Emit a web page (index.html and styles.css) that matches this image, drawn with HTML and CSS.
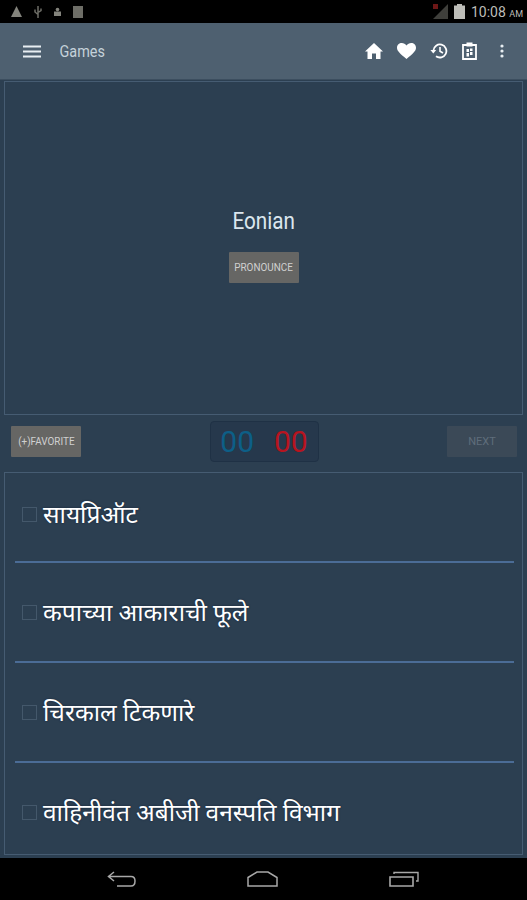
FILE: index.html
```html
<!DOCTYPE html>
<html>
  <head>
    <title>Games</title>
    <link rel="stylesheet" href="styles.css">
  </head>
  <body>
    <div class="status-bar">
      <div class="status-left">
        <svg width="11" height="11" viewBox="0 0 11 11"><path d="M5.5 0 L11 11 H0 Z" fill="#83837c"/></svg>
        <svg width="8" height="12" viewBox="0 0 8 12"><path d="M4 0 V12 M4 8.5 L1 6 V3.5 M4 6.5 L7 4.5 V2.5" stroke="#6e6e67" stroke-width="1.5" fill="none"/></svg>
        <svg width="7" height="9" viewBox="0 0 7 9"><path d="M0 9 V4.5 H7 V9 Z" fill="#83837c"/><circle cx="3.5" cy="2.6" r="1.8" fill="#83837c"/></svg>
        <svg width="10" height="12" viewBox="0 0 10 12"><rect width="10" height="12" fill="#6e6e67"/></svg>
      </div>
      <div class="status-right">
        <svg width="15" height="15" viewBox="0 0 15 15"><path d="M15 0 V15 H0 Z" fill="#3f3f3b"/><rect x="0" y="0" width="5" height="5" fill="#6d1717"/></svg>
        <svg width="11" height="15" viewBox="0 0 11 15"><path d="M3 0 H8 V1.5 H11 V15 H0 V1.5 H3 Z" fill="#bdbdb8"/></svg>
        <span class="clock">10:08 <small>AM</small></span>
      </div>
    </div>

    <div class="toolbar">
      <svg width="18" height="13" viewBox="0 0 18 13"><path d="M0 1.5 H18 M0 6.5 H18 M0 11.5 H18" stroke="#e8eef2" stroke-width="2.2"/></svg>
      <span class="toolbar-title"><span class="narrow">Games</span></span>
      <div class="toolbar-actions">
        <svg width="18" height="16" viewBox="0 0 18 16"><path d="M9 0 L18 8.5 H15.5 V16 H11 V10.5 H7 V16 H2.5 V8.5 H0 Z" fill="#fff"/></svg>
        <svg width="19" height="16" viewBox="0 0 19 16"><path d="M9.5 16 C3 10.5 0 8 0 4.7 C0 2 2.2 0 4.8 0 C6.6 0 8.5 1 9.5 2.6 C10.5 1 12.4 0 14.2 0 C16.8 0 19 2 19 4.7 C19 8 16 10.5 9.5 16 Z" fill="#fff"/></svg>
        <svg width="18" height="16" viewBox="0 0 18 16"><path d="M3.4 7.5 A6.5 6.5 0 1 1 6 13.2" stroke="#fff" stroke-width="1.8" fill="none"/><path d="M0.4 7 H6.2 L3.3 10.5 Z" fill="#fff"/><path d="M10 4 V8.2 L13 10" stroke="#fff" stroke-width="1.6" fill="none"/></svg>
        <svg width="15" height="18" viewBox="0 0 15 18"><path d="M1 3 H14 V17 H1 Z" stroke="#fff" stroke-width="1.8" fill="none"/><rect x="4.5" y="0.5" width="6" height="4" fill="#fff"/><path d="M4.5 7 H7 V10 H4.5 Z M8 10 H10.5 V13 H8 Z M8 6.5 H10.5 V9 H8 Z M4.5 11 H7 V14.5 H4.5 Z" fill="#fff"/></svg>
        <svg class="more-icon" width="4" height="14" viewBox="0 0 4 14"><circle cx="2" cy="2" r="1.6" fill="#e8eef2"/><circle cx="2" cy="7" r="1.6" fill="#e8eef2"/><circle cx="2" cy="12" r="1.6" fill="#e8eef2"/></svg>
      </div>
    </div>

    <div class="content">
      <div class="word-panel">
        <div class="word"><span class="narrow">Eonian</span></div>
        <button class="btn" type="button"><span class="narrow">PRONOUNCE</span></button>
      </div>

      <div class="controls">
        <button class="btn btn-favorite" type="button"><span class="narrow">(+)FAVORITE</span></button>
        <div class="score">
          <span class="score-blue">00</span>
          <span class="score-red">00</span>
        </div>
        <button class="btn btn-next" type="button" disabled>NEXT</button>
      </div>

      <div class="answers">
        <label class="answer"><span class="check"></span><span>सायप्रिऑट</span></label>
        <label class="answer"><span class="check"></span><span>कपाच्या आकाराची फूले</span></label>
        <label class="answer"><span class="check"></span><span>चिरकाल टिकणारे</span></label>
        <label class="answer"><span class="check"></span><span>वाहिनीवंत अबीजी वनस्पति विभाग</span></label>
      </div>
    </div>

    <div class="nav-bar">
      <svg width="29" height="16" viewBox="0 0 29 16"><path d="M7 1 L1.5 5.5 L7 10 M1.5 5.5 H24 C27 5.5 28 7.5 28 10 C28 12.5 27 15 24 15 H10" stroke="#a8a8a8" stroke-width="1.5" fill="none"/></svg>
      <svg width="31" height="16" viewBox="0 0 31 16"><path d="M1 6.5 L10 1 H21 L30 6.5 V15 H1 Z" stroke="#a8a8a8" stroke-width="1.5" fill="none"/></svg>
      <svg width="30" height="16" viewBox="0 0 30 16"><path d="M1 6 H24 V15 H1 Z" stroke="#a8a8a8" stroke-width="1.6" fill="none"/><path d="M5 3 V1.5 H29 V10 H27" stroke="#a8a8a8" stroke-width="1.4" fill="none"/></svg>
    </div>
  </body>
</html>
```

FILE: styles.css
```css
/* page frame */
body {
  margin: 0;
  width: 527px;
  height: 900px;
  display: flex;
  flex-direction: column;
  overflow: hidden;
  background-color: #2c3f51;
  font-family: Roboto, "Noto Sans", sans-serif;
}

/* squeezes Roboto to the narrow face of the app */
.narrow {
  display: inline-block;
  transform: scaleX(0.9);
}

.status-bar {
  height: 23px;
  flex: none;
  display: flex;
  align-items: center;
  justify-content: space-between;
  background-color: #000;
}

.status-left {
  display: flex;
  align-items: center;
  gap: 12px;
  padding-left: 11px;
}

.status-right {
  display: flex;
  align-items: center;
  gap: 6px;
  padding-right: 4px;
}

.clock {
  color: #bdbdb8;
  font-size: 14px;
}

.clock small {
  font-size: 9px;
}

.toolbar {
  height: 57px;
  flex: none;
  box-sizing: border-box;
  display: flex;
  align-items: center;
  padding: 0 23px 1px;
  background-color: #4e6070;
  box-shadow: inset 0 -1px 0 #3c4e5f;
}

.toolbar-title {
  margin-left: 16px;
  color: #c5d2da;
  font-size: 16px;
}

.toolbar-actions {
  margin-left: auto;
  display: flex;
  align-items: center;
  gap: 14px;
}

.more-icon {
  margin-left: 9px;
}

.content {
  flex: 1;
  min-height: 0;
  display: flex;
  flex-direction: column;
  padding: 1px 4px 3px;
}

.word-panel {
  height: 334px;
  flex: none;
  box-sizing: border-box;
  display: flex;
  flex-direction: column;
  align-items: center;
  justify-content: center;
  padding-bottom: 6px;
  border: 1px solid #465c72;
}

.word {
  color: #dbe6ee;
  font-size: 23px;
  line-height: 30px;
}

.btn {
  height: 31px;
  margin-top: 15px;
  padding: 0;
  width: 70px;
  border: none;
  border-radius: 1px;
  background-color: #666664;
  color: #d0d0d0;
  font-family: Roboto, sans-serif;
  font-size: 11px;
}

.controls {
  height: 57px;
  flex: none;
  box-sizing: border-box;
  display: flex;
  align-items: center;
  justify-content: space-between;
  padding: 0 6px 4px 7px;
}

.btn-favorite {
  margin-top: 0;
}

.btn-next {
  margin-top: 0;
  background-color: #3b4957;
  color: #5f6d7b;
}

.score {
  width: 109px;
  height: 41px;
  box-sizing: border-box;
  display: flex;
  align-items: center;
  justify-content: center;
  gap: 20px;
  border: 1px solid #1f3145;
  border-radius: 4px;
  background-color: #26384c;
  font-size: 30px;
}

.score-blue {
  color: #0d5f87;
}

.score-red {
  color: #b8141f;
}

.answers {
  height: 383px;
  flex: none;
  box-sizing: border-box;
  display: flex;
  flex-direction: column;
  padding: 0 8px 0 10px;
  border: 1px solid #465c72;
}

.answer {
  height: 99px;
  flex: none;
  display: flex;
  align-items: center;
  gap: 6px;
  padding-left: 7px;
  margin-bottom: -1px;
  border-bottom: 2px solid #4b6c96;
  color: #fff;
  font-size: 24.5px;
  text-shadow: 0 0 2px #14243a;
}

.answer:first-child {
  height: 81px;
  padding-bottom: 7px;
}

.answer:last-child {
  border-bottom: none;
}

.check {
  width: 13px;
  height: 13px;
  flex: none;
  margin-top: 2px;
  border: 1px solid #44586b;
}

.nav-bar {
  height: 42px;
  flex: none;
  display: flex;
  align-items: center;
  justify-content: space-between;
  padding: 0 108px 0 107px;
  background-color: #000;
}
```
